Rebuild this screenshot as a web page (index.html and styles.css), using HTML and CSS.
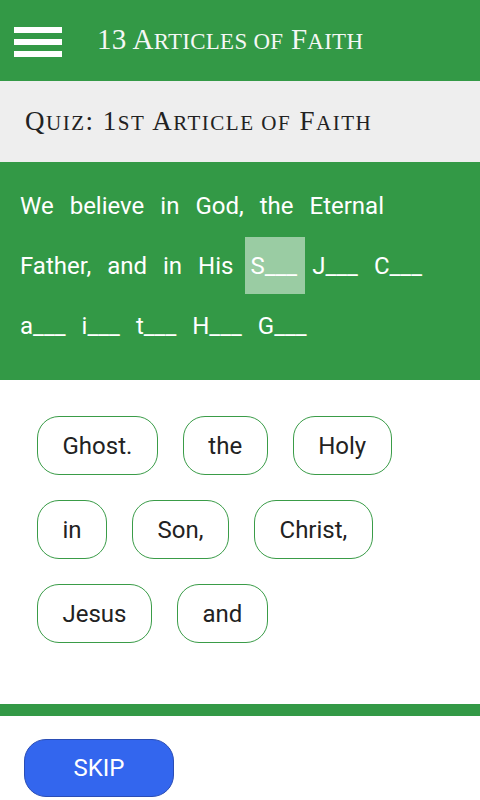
FILE: index.html
```html
<!DOCTYPE html>
<html>
<head>
<meta charset="utf-8">
<link rel="stylesheet" href="styles.css">
</head>
<body>
<div class="app">
  <header class="topbar">
    <div class="menu"><span></span><span></span><span></span></div>
    <h1 class="title">13 A<span class="sc">rticles of</span> F<span class="sc">aith</span></h1>
  </header>
  <div class="subbar">
    <h2 class="subtitle">Q<span class="sc">uiz</span>: 1<span class="sc">st</span> A<span class="sc">rticle of</span> F<span class="sc">aith</span></h2>
  </div>
  <section class="quiz">
    <span class="w">We</span><span class="w">believe</span><span class="w">in</span><span class="w">God,</span><span class="w">the</span><span class="w">Eternal</span>
    <span class="w">Father,</span><span class="w">and</span><span class="w">in</span><span class="w">His</span><span class="w active">S___</span><span class="w">J___</span><span class="w">C___</span>
    <span class="w">a___</span><span class="w">i___</span><span class="w">t___</span><span class="w">H___</span><span class="w">G___</span>
  </section>
  <section class="choices">
    <span class="chip">Ghost.</span><span class="chip">the</span><span class="chip">Holy</span>
    <span class="chip">in</span><span class="chip">Son,</span><span class="chip">Christ,</span>
    <span class="chip">Jesus</span><span class="chip">and</span>
  </section>
  <div class="divider"></div>
  <footer class="footer">
    <button class="skip">SKIP</button>
  </footer>
</div>
</body>
</html>
```
FILE: styles.css
```css
html, body {
  margin: 0;
  padding: 0;
  background: #ffffff;
}
.app {
  width: 480px;
  height: 800px;
  display: flex;
  flex-direction: column;
  overflow: hidden;
  font-family: Roboto, "Liberation Sans", sans-serif;
}
.topbar {
  height: 81px;
  flex: none;
  background: #339946;
  display: flex;
  align-items: center;
  padding-left: 14px;
  box-sizing: border-box;
}
.menu {
  width: 48px;
  display: flex;
  flex-direction: column;
  gap: 6px;
  margin-top: 2px;
}
.menu span {
  display: block;
  height: 6px;
  background: #ffffff;
}
.title {
  margin: 0 0 0 35px;
  font-family: "Liberation Serif", "DejaVu Serif", serif;
  font-weight: normal;
  font-size: 29px;
  color: #f5f7f5;
  letter-spacing: 0.3px;
  line-height: 1;
  position: relative;
  top: -1px;
}
.sc {
  text-transform: uppercase;
  font-size: 0.79em;
}
.subbar {
  height: 81px;
  flex: none;
  background: #eeeeee;
  display: flex;
  align-items: center;
  padding-left: 25px;
  box-sizing: border-box;
}
.subtitle {
  margin: 0;
  font-family: "Liberation Serif", "DejaVu Serif", serif;
  font-weight: normal;
  font-size: 27px;
  color: #222222;
  letter-spacing: 1.5px;
  line-height: 1;
}
.subtitle .sc {
  font-size: 0.78em;
}
.quiz {
  flex: none;
  background: #339946;
  padding: 15px 10px 26px 15px;
  display: flex;
  flex-wrap: wrap;
  column-gap: 6px;
  row-gap: 3px;
  height: 218px;
  box-sizing: border-box;
  align-content: flex-start;
}
.w {
  height: 57px;
  padding: 0 5px;
  display: flex;
  align-items: center;
  color: #ffffff;
  font-size: 24px;
}
.w.active {
  background: #9acca3;
  padding: 0 8px 0 5px;
  margin-left: 1px;
  margin-right: -4px;
}
.choices {
  flex: 1;
  padding: 36px 37px 0 37px;
  display: flex;
  flex-wrap: wrap;
  gap: 25px;
  align-content: flex-start;
}
.chip {
  height: 59px;
  box-sizing: border-box;
  border: 1px solid #3a9c48;
  border-radius: 22px;
  padding: 0 24.5px;
  display: flex;
  align-items: center;
  font-size: 24px;
  color: #222222;
}
.divider {
  height: 12px;
  flex: none;
  background: #339946;
}
.footer {
  height: 84px;
  flex: none;
  padding: 23px 0 0 24px;
  box-sizing: border-box;
}
.skip {
  width: 150px;
  height: 58px;
  border: 1px solid #2a4db5;
  border-radius: 22px;
  background: #3366ee;
  color: #ffffff;
  font-family: Roboto, "Liberation Sans", sans-serif;
  font-size: 24px;
  padding: 0;
}
```
